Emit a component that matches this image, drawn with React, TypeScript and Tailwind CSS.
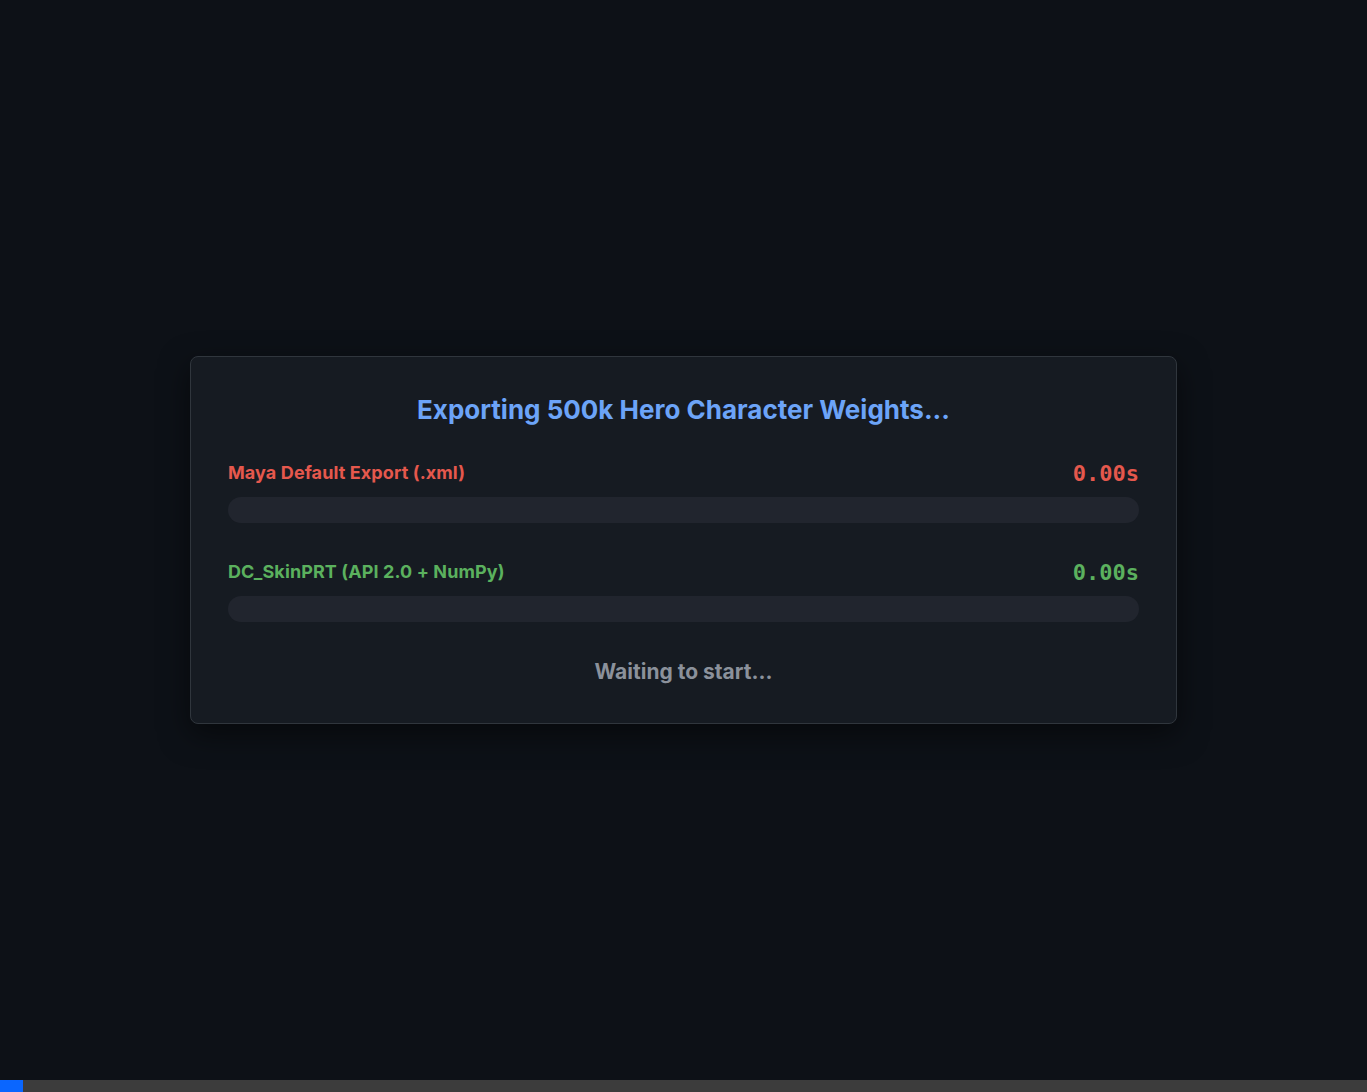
export default function App() {
  const rows = [
    { label: "Maya Default Export (.xml)", time: "0.00s", color: "text-[#e5584d]" },
    { label: "DC_SkinPRT (API 2.0 + NumPy)", time: "0.00s", color: "text-[#5bb15e]" },
  ];

  return (
    <div className="flex h-screen flex-col bg-[#0d1117] font-['Inter','Noto_Sans',sans-serif]">
      <div className="flex flex-1 items-center justify-center">
        <div className="w-[987px] rounded-lg border border-[#30363d] bg-[#161b22] px-[37px] pb-[37px] pt-[37px] shadow-[0_10px_30px_rgba(0,0,0,0.5)]">
          <h2 className="text-center text-[26px] font-bold leading-[32px] text-[#6ca4f8]">
            Exporting 500k Hero Character Weights...
          </h2>

          <div className="mt-[34px] flex flex-col gap-[36px]">
            {rows.map((row) => (
              <div key={row.label}>
                <div className="flex items-center justify-between">
                  <span className={`-mt-[2px] text-[18px] font-bold leading-[26px] tracking-[0.1px] ${row.color}`}>
                    {row.label}
                  </span>
                  <span
                    className={`font-['DejaVu_Sans_Mono',monospace] text-[22px] font-bold leading-[28px] ${row.color}`}
                  >
                    {row.time}
                  </span>
                </div>
                <div className="mt-[9px] h-[26px] w-full rounded-full bg-[#21252e]" />
              </div>
            ))}
          </div>

          <p className="mt-[36px] text-center text-[21px] font-bold leading-[28px] text-[#8b919b]">
            Waiting to start...
          </p>
        </div>
      </div>

      {/* bottom progress strip */}
      <div className="flex h-3 w-full bg-[#3c3c3c]">
        <div className="h-full w-[23px] bg-[#0a66ff]" />
      </div>
    </div>
  );
}
